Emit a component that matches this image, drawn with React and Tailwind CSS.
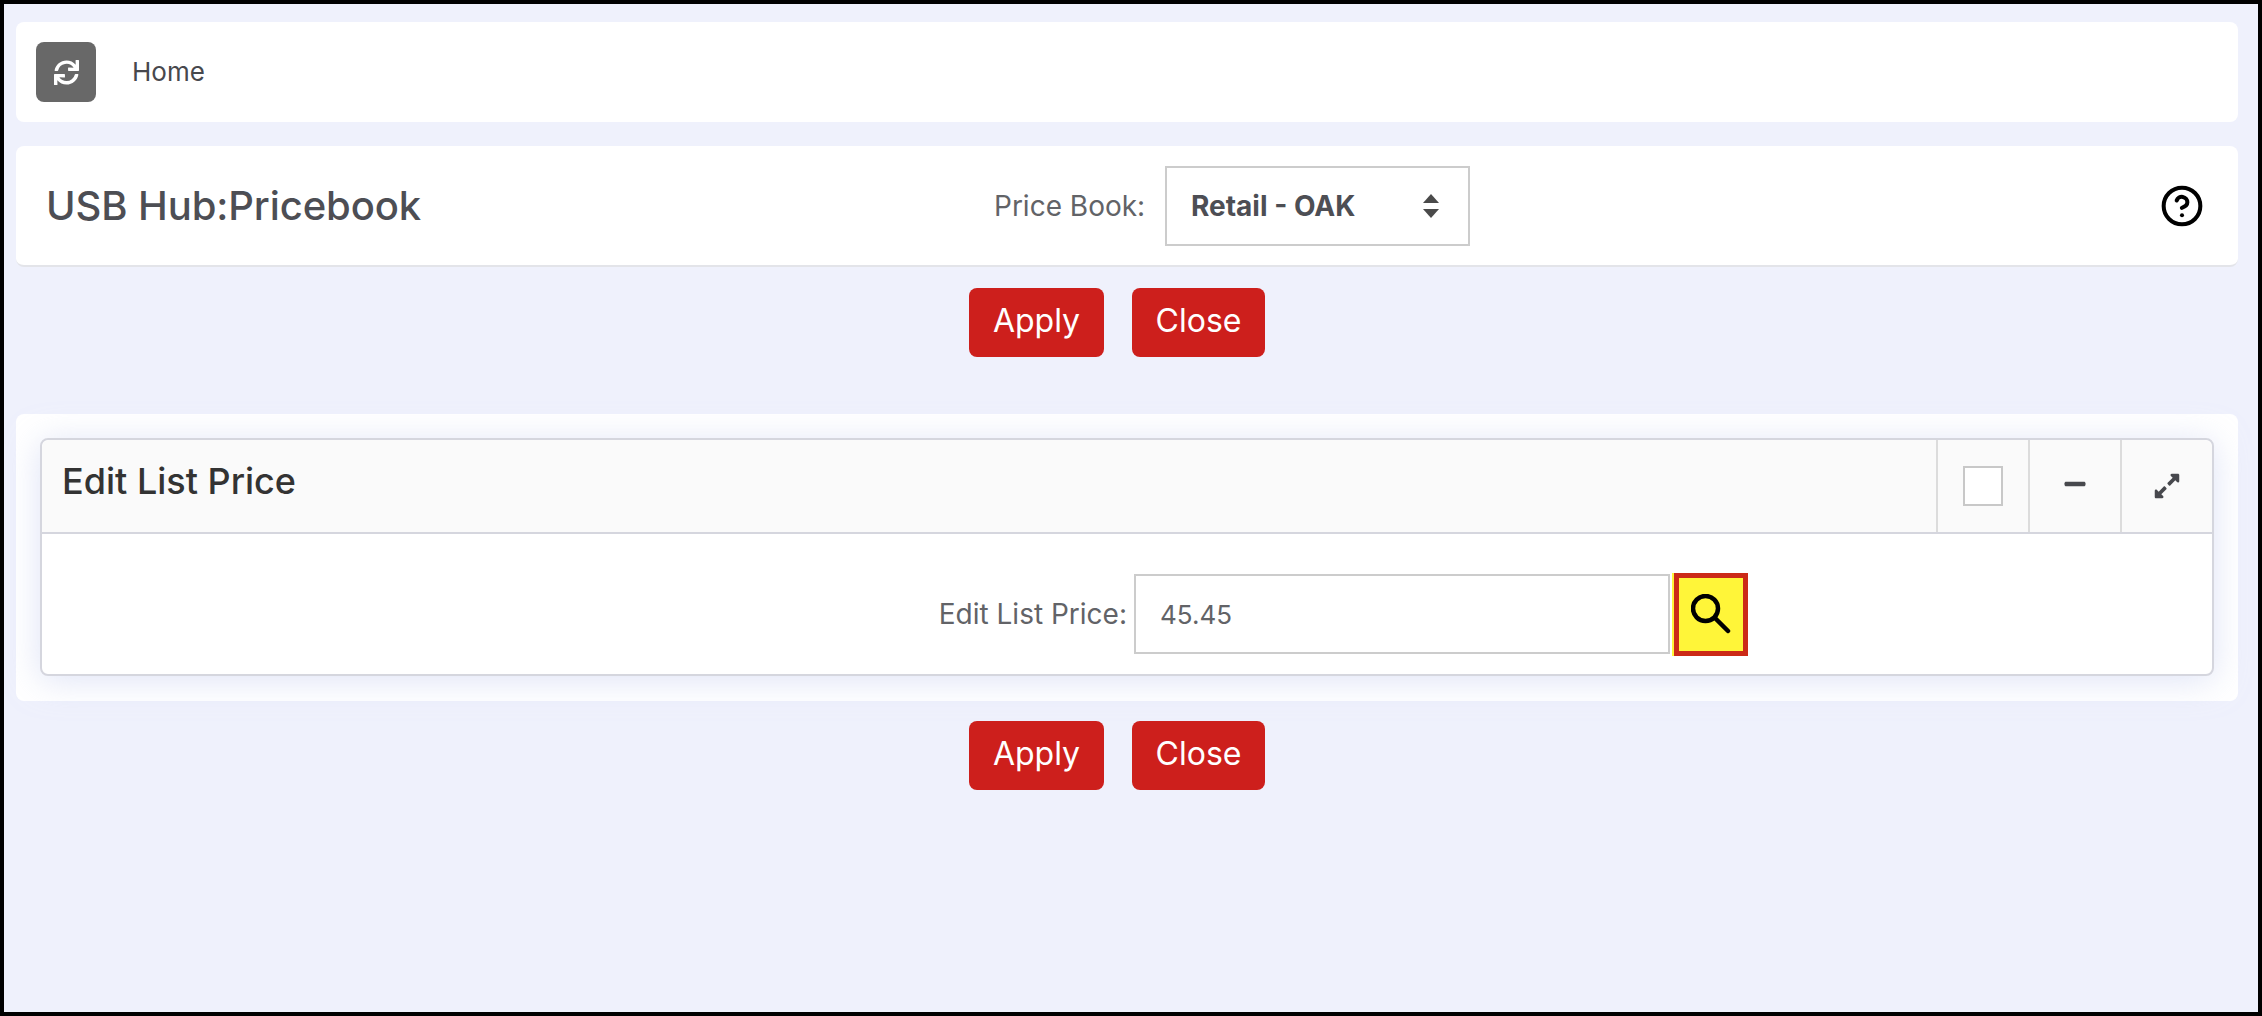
import React from "react";
import { FaSync, FaMinus, FaExpandAlt } from "react-icons/fa";
import { CircleHelp } from "lucide-react";

const ActionButtons = ({ className }) => (
  <div className={`flex justify-start gap-7 pl-[953px] ${className}`}>
    <button className="w-[135px] h-[69px] pb-[3px] rounded-lg bg-[#cd1f1c] text-white text-[32px]">
      Apply
    </button>
    <button className="w-[133px] h-[69px] pb-[3px] rounded-lg bg-[#cd1f1c] text-white text-[32px]">
      Close
    </button>
  </div>
);

const App = () => {
  return (
    <div className="w-[2262px] h-[1016px] border-4 border-black bg-[#eff1fc] pl-3 pr-5 pt-[18px] overflow-hidden font-['Inter',sans-serif]">
      <div className="flex items-center h-[100px] rounded-lg bg-white pl-5">
        <div className="flex items-center justify-center w-[60px] h-[60px] rounded-lg bg-[#686868] text-white">
          <FaSync size={25} />
        </div>
        <span className="ml-9 pb-[2px] text-[26px] text-[#47484d]">Home</span>
      </div>

      <div className="flex items-center h-[121px] mt-6 rounded-lg bg-white border-b-2 border-[#e3e4e9]">
        <h1 className="w-[978px] pl-[30px] text-[40px] font-medium tracking-[-0.1px] text-[#4d4e54]">USB Hub:Pricebook</h1>
        <span className="w-[171px] text-[28px] text-[#626367]">Price Book:</span>
        <div className="flex items-center justify-between w-[305px] h-20 border-2 border-[#cccccc] pl-[24px] pr-[29px]">
          <span className="text-[28px] font-bold text-[#4d4e54]">Retail - OAK</span>
          <svg width="16" height="24" viewBox="0 0 16 24" fill="#4a4a4a">
            <path d="M8 0 16 9H0Z" />
            <path d="M0 15H16L8 24Z" />
          </svg>
        </div>
        <CircleHelp className="ml-auto mr-[34px] text-black" size={44} strokeWidth={2.2} />
      </div>

      <ActionButtons className="mt-[21px]" />

      <div className="mt-[57px] h-[287px] rounded-lg bg-white p-6">
        <div className="h-[238px] rounded-lg border-2 border-[#d5d6de] bg-white shadow-[0_4px_34px_rgba(200,208,240,0.6)]">
          <div className="flex items-stretch h-[94px] rounded-t-lg border-b-2 border-[#d5d6de] bg-[#fafafa]">
            <h2 className="flex-1 pl-5 pt-[14px] text-[36px] font-medium text-[#333333]">Edit List Price</h2>
            <div className="flex items-center justify-center w-[92px] border-l-2 border-[#dcdcdc]">
              <div className="w-10 h-10 border-2 border-[#c8c8c8] bg-white" />
            </div>
            <div className="flex items-center justify-center w-[92px] pb-1 border-l-2 border-[#dcdcdc] text-[#47484d]">
              <FaMinus size={24} />
            </div>
            <div className="flex items-center justify-center w-[92px] border-l-2 border-[#dcdcdc] text-[#47484d]">
              <FaExpandAlt size={28} />
            </div>
          </div>
          <div className="flex items-center h-[140px] pt-5">
            <label className="w-[1092px] pr-[7px] text-right text-[28px] text-[#626367]">Edit List Price:</label>
            <input
              readOnly
              value="45.45"
              className="w-[536px] h-[80px] border-2 border-[#cccccc] bg-white pl-6 text-[26px] text-[#626367] outline-none"
            />
            <button className="flex items-center justify-center ml-1 w-[74px] h-[83px] border-[5px] border-[#cb2a17] bg-[#fff539] text-black shadow-[-2px_0_0_#fff539]">
              <svg width="40" height="40" viewBox="0 0 40 40" fill="none" stroke="currentColor" strokeWidth="4.5" strokeLinecap="round">
                <circle cx="14.5" cy="14.5" r="12.5" />
                <line x1="24" y1="24" x2="37" y2="37" />
              </svg>
            </button>
          </div>
        </div>
      </div>

      <ActionButtons className="mt-5" />
    </div>
  );
};

export default App;
